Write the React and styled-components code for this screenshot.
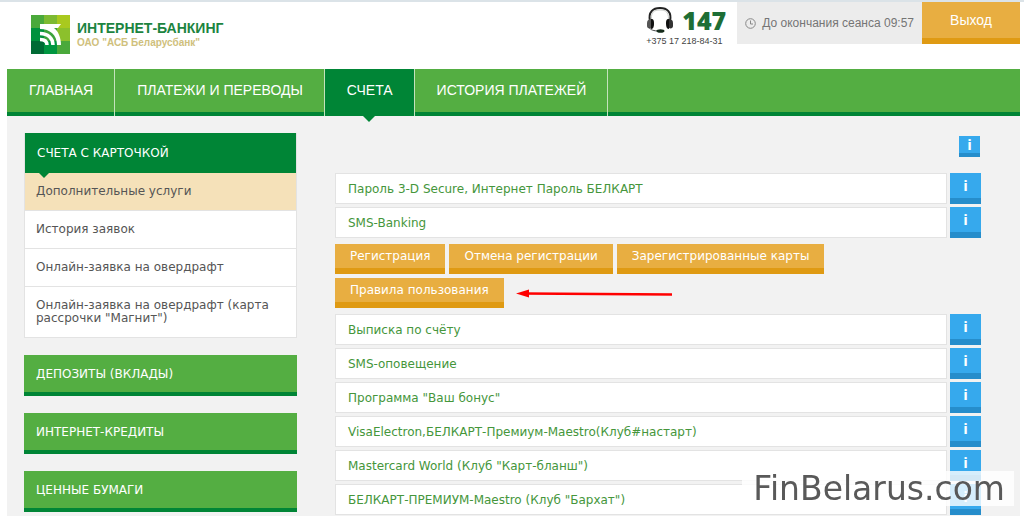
import React from "react";
import styled, { createGlobalStyle } from "styled-components";

const GlobalStyle = createGlobalStyle`
    * {
        box-sizing: border-box;
    }

    body {
        margin: 0;
        background: #fff;
        font-family: "DejaVu Sans", Verdana, sans-serif;
        font-size: 12px;
        color: #555;
    }
`;

const Page = styled.div`
    padding: 0 4px 0 7px;
    border-top: 2px solid #dbe3e8;
`;

const Header = styled.header`
    display: flex;
    align-items: flex-start;
    height: 67px;
`;

const Brand = styled.a`
    display: flex;
    align-items: center;
    gap: 7px;
    margin: 13px auto 0 24px;
    text-decoration: none;
    font-family: "Liberation Sans", Arial, sans-serif;
    font-weight: bold;
`;

const BrandName = styled.div`
    color: #1c8440;
    font-size: 14px;
    line-height: 16px;
`;

const BrandOwner = styled.div`
    color: #cfc07c;
    font-size: 10px;
    line-height: 14px;
`;

const Hotline = styled.div`
    width: 80px;
    margin: 4px 11px 0 0;
    font-family: "Liberation Sans", Arial, sans-serif;
    font-size: 9px;
    line-height: 14px;
    color: #444;
    white-space: nowrap;
`;

const HotlineTop = styled.div`
    display: flex;
    align-items: center;
    gap: 8px;
    height: 28px;
`;

const HotlineNumber = styled.strong`
    font-family: "Open Sans", sans-serif;
    font-weight: 800;
    font-size: 25px;
    line-height: 28px;
    color: #1e6e35;
`;

const Session = styled.div`
    display: flex;
    align-items: center;
    gap: 6px;
    height: 42px;
    padding: 0 8px;
    background: #ececec;
    color: #757575;
    font-family: "Liberation Sans", Arial, sans-serif;
    font-size: 12px;
`;

const ExitButton = styled.button`
    width: 98px;
    height: 42px;
    padding: 0;
    border: 0;
    border-bottom: 6px solid #df9a13;
    background: #e8ae41;
    color: #fff;
    font-family: "Liberation Sans", Arial, sans-serif;
    font-size: 14px;
`;

const Nav = styled.nav`
    display: flex;
    height: 47px;
    background: #54ae42;
    border-bottom: 4px solid #008536;
`;

const NavItem = styled.a`
    position: relative;
    height: 47px;
    padding: 0 21px 0 22px;
    border-right: 1px solid #c4e2bd;
    background: ${({ $active }) => ($active ? "#008536" : "transparent")};
    color: #fff;
    font-family: "Liberation Sans", Arial, sans-serif;
    font-size: 14px;
    line-height: 42px;
    text-decoration: none;
    white-space: nowrap;

    &::after {
        content: "";
        display: ${({ $active }) => ($active ? "block" : "none")};
        position: absolute;
        top: 100%;
        left: 50%;
        margin-left: -6px;
        border: 6px solid transparent;
        border-top-color: #008536;
        border-bottom: 0;
    }
`;

const Content = styled.div`
    display: flex;
    gap: 38px;
    padding: 17px 39px 1px 17px;
    background: #f2f2f2;
`;

const Sidebar = styled.aside`
    flex: 0 0 273px;
    display: flex;
    flex-direction: column;
    gap: 17px;
`;

const Menu = styled.div`
    border: 1px solid #e3e3e3;
    border-top: 0;
    background: #fff;
`;

const MenuTitle = styled.div`
    position: relative;
    height: 40px;
    padding-left: 12px;
    background: #008536;
    color: #fff;
    line-height: 40px;

    &::after {
        content: "";
        position: absolute;
        top: 100%;
        left: 14px;
        border: 5px solid transparent;
        border-top-color: #008536;
        border-bottom: 0;
    }
`;

const MenuItem = styled.a`
    display: block;
    padding: 12px 11px;
    background: ${({ $active }) => ($active ? "#f5e1b9" : "#fff")};
    color: #555;
    line-height: 13px;
    text-decoration: none;

    & + & {
        border-top: 1px solid #e3e3e3;
    }
`;

const Section = styled.a`
    height: 41px;
    padding-left: 12px;
    background: #54ae42;
    border-bottom: 4px solid #008536;
    color: #fff;
    line-height: 38px;
    text-decoration: none;
`;

const Main = styled.main`
    flex: 1;
    min-width: 0;
    display: flex;
    flex-direction: column;
    gap: 3px;
`;

const HelpLine = styled.div`
    display: flex;
    justify-content: flex-end;
    padding: 3px 1px 13px;
`;

const Row = styled.div`
    display: flex;
    gap: 3px;
`;

const Service = styled.a`
    flex: 1;
    height: 31px;
    padding-left: 12px;
    border: 1px solid #e3e3e3;
    background: #fff;
    color: #45963b;
    line-height: 31px;
    text-decoration: none;
`;

const InfoButton = styled.button`
    width: ${({ $small }) => ($small ? 21 : 31)}px;
    height: ${({ $small }) => ($small ? 21 : 31)}px;
    padding: 0;
    border: 0;
    border-bottom: ${({ $small }) => ($small ? 4 : 6)}px solid #268dcb;
    background: #36a9ed;
    color: #fff;
    font-family: "Open Sans", Verdana, sans-serif;
    font-weight: bold;
    font-size: 15px;
    line-height: 17px;
`;

const Actions = styled.div`
    display: flex;
    flex-wrap: wrap;
    align-items: center;
    gap: 4px;
    max-width: 520px;
    padding: 3px 0;
`;

const ActionButton = styled.button`
    height: 30px;
    padding: 0 15px;
    border: 0;
    border-bottom: 6px solid #df9a13;
    background: #e8ae41;
    color: #fff;
    font-family: inherit;
    font-size: 12px;
    line-height: 24px;
`;

const Arrow = styled.svg`
    margin-left: 8px;
`;

const Watermark = styled.div`
    position: fixed;
    right: 10px;
    bottom: 10px;
    padding: 0 9px 0 11px;
    background: rgba(255, 255, 255, 0.8);
    color: #595959;
    font-size: 33px;
    line-height: 35px;
`;

const services = [
    "Выписка по счёту",
    "SMS-оповещение",
    'Программа "Ваш бонус"',
    "VisaElectron,БЕЛКАРТ-Премиум-Maestro(Клуб#настарт)",
    'Mastercard World (Клуб "Карт-бланш")',
    'БЕЛКАРТ-ПРЕМИУМ-Maestro (Клуб "Бархат")',
];

const Logo = () => (
    <svg width="39" height="39" viewBox="0 0 39 39" fill="none">
        <rect width="39" height="39" fill="#4aa93b" />
        <path d="M13 0h13v13H13z" fill="#7dba32" />
        <path d="M26 0h13v13H26z" fill="#a9c91f" />
        <path d="M26 13h13v13H26z" fill="#8cc02c" />
        <path d="M13 13h13v13H13z" fill="#3da33c" />
        <path d="M0 13h13v13H0z" fill="#00913d" />
        <path d="M0 26h13v13H0z" fill="#006b35" />
        <path d="M13 26h13v13H13z" fill="#009640" />
        <path d="M9 9h21l-3 4h-4c4 3 7 9 7 17h-4C26 20 19 14 9 14z" fill="#fff" />
        <path d="M9 13h8l4 2.500" stroke="#fff" strokeWidth="1.500" />
        <path d="M9 18.500c8 0 13 5 13 11.500M9 24.500c4.500 0 7 2 7 5.500" stroke="#fff" strokeWidth="3.500" />
    </svg>
);

const Headset = () => (
    <svg width="28" height="28" viewBox="0 0 28 28" fill="none">
        <path d="M4 15C2 6 7 2 14 2s12 4 10 13" stroke="#222" strokeWidth="2" />
        <path d="M5.500 13C5 6 8 4 14 4s8.500 2 8.500 9" stroke="#c9ccc9" />
        <path d="M1 17c0-3 2-4 4-4v9c-2 1-4 0-4-2z" fill="#555" />
        <path d="M5 13c3 0 3 2 3 5s-1 5-3 5z" fill="#111" />
        <path d="M27 17c0-3-2-4-4-4v9c2 1 4 0 4-2z" fill="#333" />
        <path d="M23 13c-3 0-3 2-3 5s1 5 3 5z" fill="#111" />
        <path d="M3 21c1 3 5 4 10 4" stroke="#444" />
        <ellipse cx="14.500" cy="25" rx="4" ry="1.800" fill="#142a1a" />
    </svg>
);

const Clock = () => (
    <svg width="11" height="11" viewBox="0 0 11 11" fill="none" stroke="#888">
        <circle cx="5.500" cy="5.500" r="4.800" />
        <path d="M5.500 2.500v3.500h2.500" />
    </svg>
);

const ServiceRow = ({ name }) => (
    <Row>
        <Service href="#">{name}</Service>
        <InfoButton>i</InfoButton>
    </Row>
);

const App = () => {
    return (
        <>
        <GlobalStyle />
        <Page>
            <Header>
                <Brand href="#">
                    <Logo />
                    <div>
                        <BrandName>ИНТЕРНЕТ-БАНКИНГ</BrandName>
                        <BrandOwner>ОАО "АСБ Беларусбанк"</BrandOwner>
                    </div>
                </Brand>
                <Hotline>
                    <HotlineTop>
                        <Headset />
                        <HotlineNumber>147</HotlineNumber>
                    </HotlineTop>
                    +375 17 218-84-31
                </Hotline>
                <Session>
                    <Clock />
                    До окончания сеанса 09:57
                </Session>
                <ExitButton>Выход</ExitButton>
            </Header>
            <Nav>
                <NavItem href="#">ГЛАВНАЯ</NavItem>
                <NavItem href="#">ПЛАТЕЖИ И ПЕРЕВОДЫ</NavItem>
                <NavItem href="#" $active>СЧЕТА</NavItem>
                <NavItem href="#">ИСТОРИЯ ПЛАТЕЖЕЙ</NavItem>
            </Nav>
            <Content>
                <Sidebar>
                    <Menu>
                        <MenuTitle>СЧЕТА С КАРТОЧКОЙ</MenuTitle>
                        <MenuItem href="#" $active>Дополнительные услуги</MenuItem>
                        <MenuItem href="#">История заявок</MenuItem>
                        <MenuItem href="#">Онлайн-заявка на овердрафт</MenuItem>
                        <MenuItem href="#">Онлайн-заявка на овердрафт (карта рассрочки "Магнит")</MenuItem>
                    </Menu>
                    <Section href="#">ДЕПОЗИТЫ (ВКЛАДЫ)</Section>
                    <Section href="#">ИНТЕРНЕТ-КРЕДИТЫ</Section>
                    <Section href="#">ЦЕННЫЕ БУМАГИ</Section>
                </Sidebar>
                <Main>
                    <HelpLine>
                        <InfoButton $small>i</InfoButton>
                    </HelpLine>
                    <ServiceRow name="Пароль 3-D Secure, Интернет Пароль БЕЛКАРТ" />
                    <ServiceRow name="SMS-Banking" />
                    <Actions>
                        <ActionButton>Регистрация</ActionButton>
                        <ActionButton>Отмена регистрации</ActionButton>
                        <ActionButton>Зарегистрированные карты</ActionButton>
                        <ActionButton>Правила пользования</ActionButton>
                        <Arrow width="156" height="10" viewBox="0 0 156 10">
                            <path d="M8 5.500l148 1" stroke="#f00" strokeWidth="2.500" />
                            <path d="M0 5.500L13 1.500v8z" fill="#f00" />
                        </Arrow>
                    </Actions>
                    {services.map((name) => (
                        <ServiceRow key={name} name={name} />
                    ))}
                </Main>
            </Content>
        </Page>
        <Watermark>FinBelarus.com</Watermark>
        </>
    );
};

export default App;
